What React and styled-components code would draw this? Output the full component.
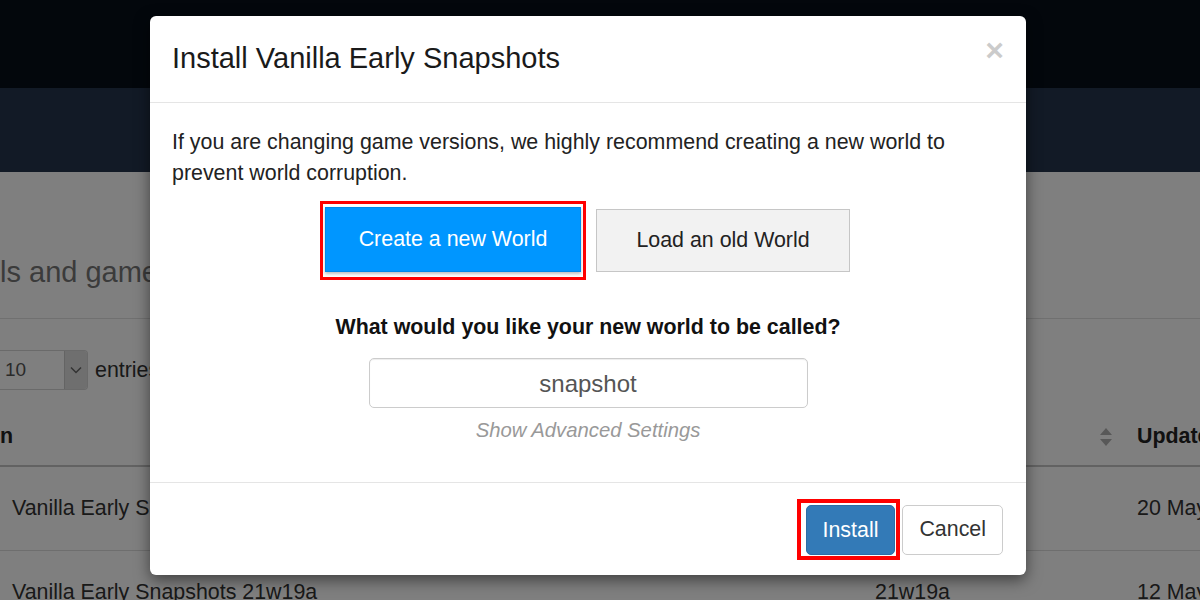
import React from 'react';
import styled, { createGlobalStyle } from 'styled-components';

const GlobalStyle = createGlobalStyle`
  html, body {
    margin: 0;
    padding: 0;
    background: #fff;
  }

  body {
    font-family: 'Liberation Sans', Arial, sans-serif;
    color: #333;
  }

  * {
    box-sizing: border-box;
  }
`;

const Page = styled.div`
  position: relative;
  width: 1200px;
  height: 600px;
  overflow: hidden;
  background: #fff;
`;

const Navbar = styled.div`
  height: 88px;
  background: #060e18;
`;

const Hero = styled.div`
  height: 84px;
  background: #24344c;
`;

const Content = styled.div`
  display: flex;
  flex-direction: column;
`;

const PageTitle = styled.h1`
  margin: 84px 0 0;
  font-size: 29px;
  font-weight: 400;
  line-height: 32px;
  color: #777;
  white-space: nowrap;
`;

const Rule = styled.div`
  height: 1px;
  margin-top: 30px;
  background: #e0e0e0;
`;

const LengthRow = styled.div`
  display: flex;
  align-items: center;
  gap: 7px;
  margin-top: 31px;
  font-size: 21.4px;
  color: #333;
`;

const Select = styled.div`
  display: flex;
  width: 90px;
  height: 40px;
  margin-left: -2px;
  border: 1px solid #d4d4d4;
  border-left: none;
  border-radius: 0 4px 4px 0;
  overflow: hidden;
`;

const SelectValue = styled.span`
  flex: 1;
  display: flex;
  align-items: center;
  padding-left: 7px;
  font-size: 19px;
  color: #555;
`;

const SelectCaret = styled.span`
  width: 23px;
  display: flex;
  align-items: center;
  justify-content: center;
  background: #dedede;
  border-left: 1px solid #c8c8c8;
  color: #555;
`;

const Table = styled.div`
  margin-top: 18px;
  font-size: 21.4px;
`;

const Row = styled.div`
  display: grid;
  grid-template-columns: 863px 262px 1fr;
  line-height: 31px;
  border-top: ${p => (p.$first ? 'none' : '1px solid #ddd')};
  border-bottom: ${p => (p.$head ? '2px solid #c4c4c4' : 'none')};
  font-weight: ${p => (p.$head ? 700 : 400)};
  color: ${p => (p.$head ? '#222' : '#333')};
`;

const Cell = styled.div`
  display: flex;
  align-items: center;
  justify-content: ${p => (p.$sort ? 'space-between' : 'flex-start')};
  padding: ${p => (p.$head ? '13px' : '26px')} 12px;
  padding-left: ${p => (p.$flush ? '0' : '12px')};
  white-space: nowrap;
`;

const Backdrop = styled.div`
  position: absolute;
  inset: 0;
  background: rgba(0, 0, 0, 0.5);
`;

const ModalLayer = styled.div`
  position: absolute;
  inset: 0;
  display: flex;
  justify-content: center;
  align-items: flex-start;
  padding: 16px 24px 0 0;
`;

const Modal = styled.div`
  width: 876px;
  background: #fff;
  border-radius: 6px;
  box-shadow: 0 5px 15px rgba(0, 0, 0, 0.5);
  display: flex;
  flex-direction: column;
`;

const ModalHeader = styled.div`
  height: 87px;
  padding: 0 22px;
  display: flex;
  align-items: center;
  justify-content: space-between;
  border-bottom: 1px solid #e5e5e5;
`;

const ModalTitle = styled.h4`
  margin: 0;
  font-size: 29px;
  font-weight: 400;
  line-height: 1.1;
  color: #1a1a1a;
`;

const Close = styled.span`
  align-self: flex-start;
  margin-top: 18px;
  font-size: 32px;
  font-weight: 700;
  line-height: 1;
  color: #000;
  opacity: 0.2;
`;

const ModalBody = styled.div`
  padding: 24px 22px 36px;
  display: flex;
  flex-direction: column;
  align-items: center;
  font-size: 21.4px;
  line-height: 31px;
  color: #222;
`;

const Lead = styled.p`
  align-self: stretch;
  margin: 0 0 12px;
`;

const ChoiceRow = styled.div`
  display: flex;
  align-items: center;
  gap: 10px;
  margin-right: 6px;
`;

const Highlight = styled.span`
  display: inline-flex;
  border: ${p => p.$w || 3}px solid #f00;
  padding: ${p => p.$pad};
`;

const ChoiceButton = styled.button`
  width: ${p => p.$w}px;
  height: ${p => p.$h}px;
  border: 1px solid ${p => (p.$primary ? '#0089ea' : '#c6c6c6')};
  border-radius: 0;
  background: ${p => (p.$primary ? '#0096ff' : '#f2f2f2')};
  color: ${p => (p.$primary ? '#fff' : '#222')};
  box-shadow: ${p => (p.$primary ? '0 2px 3px rgba(0, 0, 0, 0.25)' : 'none')};
  font-family: inherit;
  font-size: 21.4px;
  padding: 0;
`;

const Question = styled.h5`
  margin: 32px 0 0;
  font-size: 21.4px;
  font-weight: 700;
  line-height: 31px;
  color: #111;
`;

const NameInput = styled.div`
  margin-top: 15px;
  width: 439px;
  height: 50px;
  border: 1px solid #ccc;
  border-radius: 5px;
  box-shadow: inset 0 1px 1px rgba(0, 0, 0, 0.075);
  display: flex;
  align-items: center;
  justify-content: center;
  font-size: 24px;
  color: #555;
`;

const AdvancedLink = styled.span`
  margin-top: 7px;
  font-size: 20.3px;
  font-style: italic;
  color: #999;
`;

const ModalFooter = styled.div`
  border-top: 1px solid #e5e5e5;
  padding: 16px 23px 15px;
  display: flex;
  justify-content: flex-end;
  align-items: center;
  gap: 2px;
`;

const FooterButton = styled.button`
  height: 50px;
  padding: 0 16px;
  border: 1px solid ${p => (p.$primary ? '#2e6da4' : '#ccc')};
  border-radius: 5px;
  background: ${p => (p.$primary ? '#337ab7' : '#fff')};
  color: ${p => (p.$primary ? '#fff' : '#333')};
  font-family: inherit;
  font-size: 21.4px;
`;

const SortIcon = () => (
  <svg width="14" height="20" viewBox="0 0 14 20">
    <path d="M7 1 L13 8 H1 Z" fill="#b0b0b0" />
    <path d="M7 19 L13 12 H1 Z" fill="#b0b0b0" />
  </svg>
);

const Caret = () => (
  <svg width="12" height="8" viewBox="0 0 12 8">
    <path d="M1 1.5 L6 6.5 L11 1.5" fill="none" stroke="#666" strokeWidth="1.5" />
  </svg>
);

const App = () => {
  return (
    <>
      <GlobalStyle />
      <Page>
        <Navbar />
        <Hero />
        <Content>
          <PageTitle>ls and games available to install</PageTitle>
          <Rule />
          <LengthRow>
            <Select>
              <SelectValue>10</SelectValue>
              <SelectCaret>
                <Caret />
              </SelectCaret>
            </Select>
            entries
          </LengthRow>
          <Table>
            <Row $head $first>
              <Cell $head $flush>n</Cell>
              <Cell $head $sort>
                Version
                <SortIcon />
              </Cell>
              <Cell $head>Updated</Cell>
            </Row>
            <Row $first>
              <Cell>Vanilla Early Snapshots 21w20a</Cell>
              <Cell>21w20a</Cell>
              <Cell>20 May 2021</Cell>
            </Row>
            <Row>
              <Cell>Vanilla Early Snapshots 21w19a</Cell>
              <Cell>21w19a</Cell>
              <Cell>12 May 2021</Cell>
            </Row>
          </Table>
        </Content>
        <Backdrop />
        <ModalLayer>
          <Modal>
            <ModalHeader>
              <ModalTitle>Install Vanilla Early Snapshots</ModalTitle>
              <Close>×</Close>
            </ModalHeader>
            <ModalBody>
              <Lead>
                If you are changing game versions, we highly recommend creating a new world to
                prevent world corruption.
              </Lead>
              <ChoiceRow>
                <Highlight $pad="3px 2px 5px 2px">
                  <ChoiceButton $primary $w={256} $h={65}>
                    Create a new World
                  </ChoiceButton>
                </Highlight>
                <ChoiceButton $w={254} $h={63}>
                  Load an old World
                </ChoiceButton>
              </ChoiceRow>
              <Question>What would you like your new world to be called?</Question>
              <NameInput>snapshot</NameInput>
              <AdvancedLink>Show Advanced Settings</AdvancedLink>
            </ModalBody>
            <ModalFooter>
              <Highlight $w={4} $pad="2px 1px 1px 5px">
                <FooterButton $primary>Install</FooterButton>
              </Highlight>
              <FooterButton>Cancel</FooterButton>
            </ModalFooter>
          </Modal>
        </ModalLayer>
      </Page>
    </>
  );
};

export default App;
